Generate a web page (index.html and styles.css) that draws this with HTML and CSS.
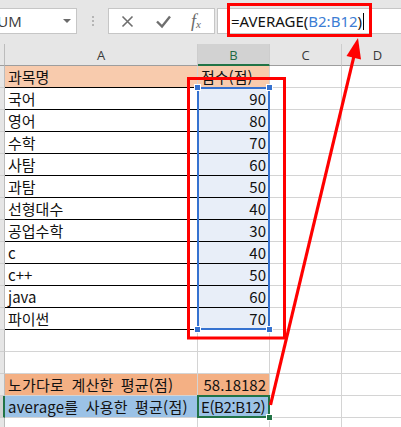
FILE: index.html
```html
<!DOCTYPE html>
<html lang="ko">
<head>
<meta charset="utf-8">
<link rel="stylesheet" href="styles.css">
</head>
<body>
<div class="app">
  <div class="toolbar">
    <div class="namebox"><span class="nb-text">SUM</span><span class="nb-arrow"></span></div>
    <div class="grip"><i></i><i></i><i></i></div>
    <div class="fxbox">
      <svg class="fx-icons" width="80" height="24" viewBox="0 0 80 24">
        <path d="M13.5 7.5 L23.5 17.5 M23.5 7.5 L13.5 17.5" stroke="#6e6e6e" stroke-width="1.6" fill="none"/>
        <path d="M48 12.5 L53 17.5 L61 7.5" stroke="#6e6e6e" stroke-width="2.4" fill="none"/>
      </svg>
      <span class="fx">f<sub>x</sub></span>
    </div>
    <div class="formula"><span>=AVERAGE(</span><span class="ref">B2:B12</span><span>)</span><span class="caret"></span></div>
  </div>

  <div class="sheet-wrap">
  <div class="sheet">
    <!-- header -->
    <div class="rh corner"></div>
    <div class="hd">A</div>
    <div class="hd hd-sel">B</div>
    <div class="hd">C</div>
    <div class="hd">D</div>

    <!-- row 1 -->
    <div class="rh"></div>
    <div class="cell tb peach">과목명</div>
    <div class="cell tb peach">점수(점)</div>
    <div class="cell"></div>
    <div class="cell"></div>

    <div class="rh"></div>
    <div class="cell tb">국어</div>
    <div class="cell tb selfill num">90</div>
    <div class="cell"></div>
    <div class="cell"></div>

    <div class="rh"></div>
    <div class="cell tb">영어</div>
    <div class="cell tb selfill num">80</div>
    <div class="cell"></div>
    <div class="cell"></div>

    <div class="rh"></div>
    <div class="cell tb">수학</div>
    <div class="cell tb selfill num">70</div>
    <div class="cell"></div>
    <div class="cell"></div>

    <div class="rh"></div>
    <div class="cell tb">사탐</div>
    <div class="cell tb selfill num">60</div>
    <div class="cell"></div>
    <div class="cell"></div>

    <div class="rh"></div>
    <div class="cell tb">과탐</div>
    <div class="cell tb selfill num">50</div>
    <div class="cell"></div>
    <div class="cell"></div>

    <div class="rh"></div>
    <div class="cell tb">선형대수</div>
    <div class="cell tb selfill num">40</div>
    <div class="cell"></div>
    <div class="cell"></div>

    <div class="rh"></div>
    <div class="cell tb">공업수학</div>
    <div class="cell tb selfill num">30</div>
    <div class="cell"></div>
    <div class="cell"></div>

    <div class="rh"></div>
    <div class="cell tb">c</div>
    <div class="cell tb selfill num">40</div>
    <div class="cell"></div>
    <div class="cell"></div>

    <div class="rh"></div>
    <div class="cell tb">c++</div>
    <div class="cell tb selfill num">50</div>
    <div class="cell"></div>
    <div class="cell"></div>

    <div class="rh"></div>
    <div class="cell tb">java</div>
    <div class="cell tb selfill num">60</div>
    <div class="cell"></div>
    <div class="cell"></div>

    <div class="rh"></div>
    <div class="cell tb">파이썬</div>
    <div class="cell tb selfill num">70</div>
    <div class="cell"></div>
    <div class="cell"></div>

    <!-- row 13 -->
    <div class="rh"></div>
    <div class="cell"></div>
    <div class="cell"></div>
    <div class="cell"></div>
    <div class="cell"></div>

    <!-- row 14 -->
    <div class="rh"></div>
    <div class="cell"></div>
    <div class="cell"></div>
    <div class="cell"></div>
    <div class="cell"></div>

    <!-- row 15 -->
    <div class="rh"></div>
    <div class="cell orange wide">노가다로 계산한 평균(점)</div>
    <div class="cell orange num">58.18182</div>
    <div class="cell"></div>
    <div class="cell"></div>

    <!-- row 16 -->
    <div class="rh rh-active"></div>
    <div class="cell blue wide">average를 사용한 평균(점)</div>
    <div class="cell blue edit">E(B2:B12)</div>
    <div class="cell"></div>
    <div class="cell"></div>

    <!-- row 17 -->
    <div class="rh"></div>
    <div class="cell"></div>
    <div class="cell"></div>
    <div class="cell"></div>
    <div class="cell"></div>
  </div>

  <div class="overlay">
    <div class="selection"><i class="h tl"></i><i class="h tr"></i><i class="h bl"></i><i class="h br"></i></div>
    <div class="active-cell"><i class="fill"></i></div>
  </div>
  </div>

  <svg class="annot" width="401" height="427" viewBox="0 0 401 427">
    <rect x="228.5" y="4.5" width="142" height="31" fill="none" stroke="#ff0000" stroke-width="3"/>
    <rect x="188.5" y="78.5" width="96" height="259.5" fill="none" stroke="#ff0000" stroke-width="3"/>
    <line x1="270.5" y1="405" x2="354" y2="56" stroke="#ff0000" stroke-width="3.2"/>
    <polygon points="358,38 361,59.5 346.5,56" fill="#ff0000"/>
  </svg>
</div>
</body>
</html>
```

FILE: styles.css
```css
html, body {
  margin: 0;
  padding: 0;
  overflow: hidden;
  background: #fff;
}

.app {
  position: relative;
  width: 401px;
  height: 427px;
  overflow: hidden;
  background: #fff;
  font-family: "Noto Sans", "Noto Sans CJK KR", sans-serif;
}

/* ---------- toolbar ---------- */
.toolbar {
  height: 44px;
  box-sizing: border-box;
  padding-top: 8px;
  background: #e6e6e6;
  display: flex;
  align-items: flex-start;
}

.namebox {
  width: 77px;
  height: 26px;
  box-sizing: border-box;
  background: #fff;
  border: 1px solid #c6c6c6;
  border-left: none;
  display: flex;
  align-items: center;
  overflow: hidden;
}

.nb-text {
  margin-left: -11px;
  font-size: 15px;
  color: #3a3a3a;
  font-family: "Open Sans", "Noto Sans", sans-serif;
}

.nb-arrow {
  margin-left: auto;
  margin-right: 5px;
  width: 0;
  height: 0;
  border-left: 4px solid transparent;
  border-right: 4px solid transparent;
  border-top: 4px solid #6a6a6a;
}

.grip {
  width: 31px;
  height: 26px;
  display: flex;
  flex-direction: column;
  align-items: center;
  justify-content: center;
  gap: 2px;
}

.grip i {
  display: block;
  width: 2px;
  height: 2px;
  background: #b5b5b5;
}

.fxbox {
  width: 107px;
  height: 26px;
  box-sizing: border-box;
  background: #fff;
  border: 1px solid #c6c6c6;
  display: flex;
  align-items: center;
  overflow: hidden;
}

.fx-icons {
  flex: none;
}

.fx {
  margin-left: 2px;
  font-family: "Liberation Serif", serif;
  font-style: italic;
  font-size: 18px;
  color: #6a6a6a;
  line-height: 1;
}

.fx sub {
  font-size: 11px;
  vertical-align: -1px;
}

.formula {
  flex: 1;
  margin-left: 2px;
  height: 26px;
  box-sizing: border-box;
  background: #fff;
  border: 1px solid #c6c6c6;
  border-right: none;
  padding-left: 13px;
  display: flex;
  align-items: center;
  font-size: 15px;
  color: #111;
  white-space: nowrap;
}

.formula .ref {
  color: #3c7dd4;
}

.caret {
  display: inline-block;
  width: 1px;
  height: 17px;
  margin-left: 1px;
  background: #000;
}

/* ---------- sheet ---------- */
.sheet-wrap {
  display: grid;
  width: 414px;
}

.sheet,
.overlay {
  grid-area: 1 / 1;
  display: grid;
  grid-template-columns: 5px 193px 72px 72px 72px;
  grid-template-rows: repeat(18, 22px);
}

.overlay {
  pointer-events: none;
}

.rh {
  background: #e6e6e6;
  box-sizing: border-box;
  border-right: 1px solid #bcbcbc;
  border-bottom: 1px solid #cfcfcf;
}

.rh.corner {
  border-bottom: 1px solid #9e9e9e;
}

.rh.rh-active {
  border-right: 2px solid #217346;
  background: #d2d2d2;
}

.hd {
  background: #e6e6e6;
  box-sizing: border-box;
  border-right: 1px solid #cdcdcd;
  border-bottom: 1px solid #9e9e9e;
  display: flex;
  align-items: center;
  justify-content: center;
  padding-top: 1px;
  font-size: 13px;
  color: #3a3a3a;
  font-family: "Open Sans", "Noto Sans", sans-serif;
}

.hd.hd-sel {
  background: #d2d2d2;
  border-bottom: 2px solid #217346;
  color: #1f6b45;
}

.cell {
  box-sizing: border-box;
  border-right: 1px solid #d4d4d4;
  border-bottom: 1px solid #d4d4d4;
  padding: 0 3px;
  display: flex;
  align-items: center;
  white-space: nowrap;
  overflow: hidden;
  font-family: "Noto Sans CJK KR", "Noto Sans", sans-serif;
  font-size: 15px;
  color: #111;
}

.cell.wide {
  word-spacing: 3px;
  letter-spacing: 0.2px;
}

.cell.edit {
  letter-spacing: -0.4px;
}

.cell.tb {
  border-bottom-color: #000;
}

.cell.num {
  justify-content: flex-end;
}

.peach {
  background: #f8cbad;
}

.orange {
  background: #f4b084;
}

.blue {
  background: #9bc2e6;
}

.selfill {
  background: #e8eef8;
}

.selection {
  grid-column: 3;
  grid-row: 3 / 14;
  margin: -1px 0 0 -1px;
  border: 2px solid #3572d0;
  position: relative;
}

.selection .h {
  position: absolute;
  width: 5px;
  height: 5px;
  background: #3572d0;
  border: 1px solid #fff;
}

.selection .tl { left: -5px; top: -5px; }
.selection .tr { right: -5px; top: -5px; }
.selection .bl { left: -5px; bottom: -5px; }
.selection .br { right: -5px; bottom: -5px; }

.active-cell {
  grid-column: 3;
  grid-row: 17;
  margin: -1px 0 0 -1px;
  border: 2px solid #217346;
  position: relative;
}

.active-cell .fill {
  position: absolute;
  right: -5px;
  bottom: -5px;
  width: 5px;
  height: 5px;
  background: #217346;
  border: 1px solid #fff;
}

/* ---------- annotations ---------- */
.annot {
  position: absolute;
  left: 0;
  top: 0;
  pointer-events: none;
}
```
